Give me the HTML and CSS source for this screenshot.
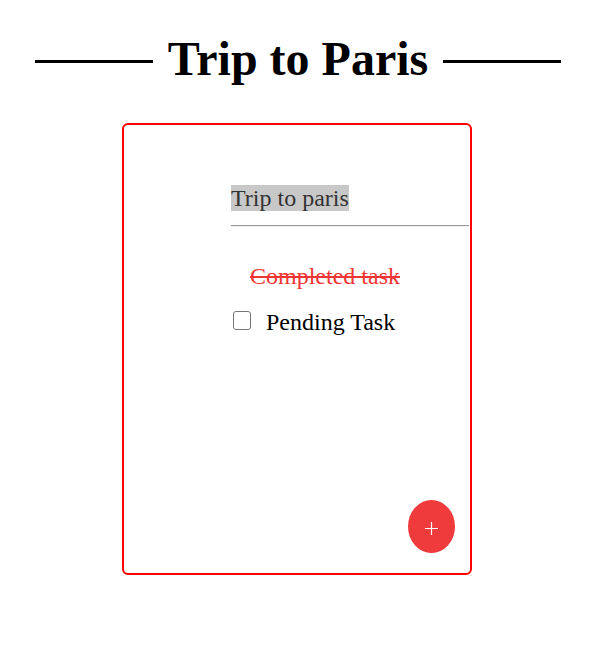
FILE: index.html
```html
<!DOCTYPE html>
<html lang="en">
<head>
<meta charset="utf-8">
<title>Trip to Paris</title>
<link rel="stylesheet" href="styles.css">
</head>
<body>
<header class="header">
  <span class="rule"></span>
  <h1 class="title">Trip to Paris</h1>
  <span class="rule"></span>
</header>
<main class="card">
  <div class="name-field"><span class="name-text">Trip to paris</span></div>
  <ul class="tasks">
    <li class="task task-done">Completed task</li>
    <li class="task task-pending"><span class="check"></span><span class="task-label">Pending Task</span></li>
  </ul>
  <button class="fab" type="button" aria-label="Add task">
    <svg class="fab-icon" width="13" height="13" viewBox="0 0 13 13"><path d="M6.5 0v13M0 6.5h13" stroke="#fff" stroke-width="1.2" fill="none"/></svg>
  </button>
</main>
</body>
</html>
```
FILE: styles.css
```css
* { box-sizing: border-box; }
body {
  margin: 0;
  background: #fff;
  font-family: "Liberation Serif", "Times New Roman", serif;
  color: #000;
}
.header {
  display: flex;
  justify-content: center;
  align-items: flex-start;
  gap: 15px;
  padding-top: 31px;
}
.rule {
  display: block;
  width: 118px;
  height: 3px;
  margin-top: 29px;
  background: #000;
}
.title {
  margin: 0;
  font-size: 48px;
  line-height: 55px;
  font-weight: bold;
}
.card {
  position: relative;
  width: 350px;
  height: 452px;
  margin: 37px 0 0 calc(50% - 176px);
  padding: 60px 1px 0 107px;
  border: 2px solid #ff0000;
  border-radius: 6px;
}
.name-field {
  font-size: 24px;
  line-height: 27px;
  color: #333;
  padding-bottom: 13px;
  border-bottom: 1px solid #9a9a9a;
  box-shadow: 0 1px 0 #efefef;
}
.name-text {
  background: #c8c8c8;
}
.tasks {
  list-style: none;
  margin: 37px 0 0;
  padding: 0;
  font-size: 24px;
}
.task {
  line-height: 27px;
}
.task-done {
  padding-left: 19px;
  color: #ef3535;
  text-decoration: line-through;
}
.task-pending {
  display: flex;
  align-items: flex-start;
  margin-top: 19px;
}
.check {
  width: 18px;
  height: 19px;
  margin: 2px 15px 0 2px;
  border: 1px solid #767676;
  border-radius: 3px;
  background: #fff;
}
.fab {
  position: absolute;
  right: 15px;
  bottom: 20px;
  width: 47px;
  height: 53px;
  padding: 0;
  border: none;
  border-radius: 50%;
  background: #ef3b3b;
  display: flex;
  align-items: center;
  justify-content: center;
}
.fab-icon {
  margin-top: 4px;
}
```
